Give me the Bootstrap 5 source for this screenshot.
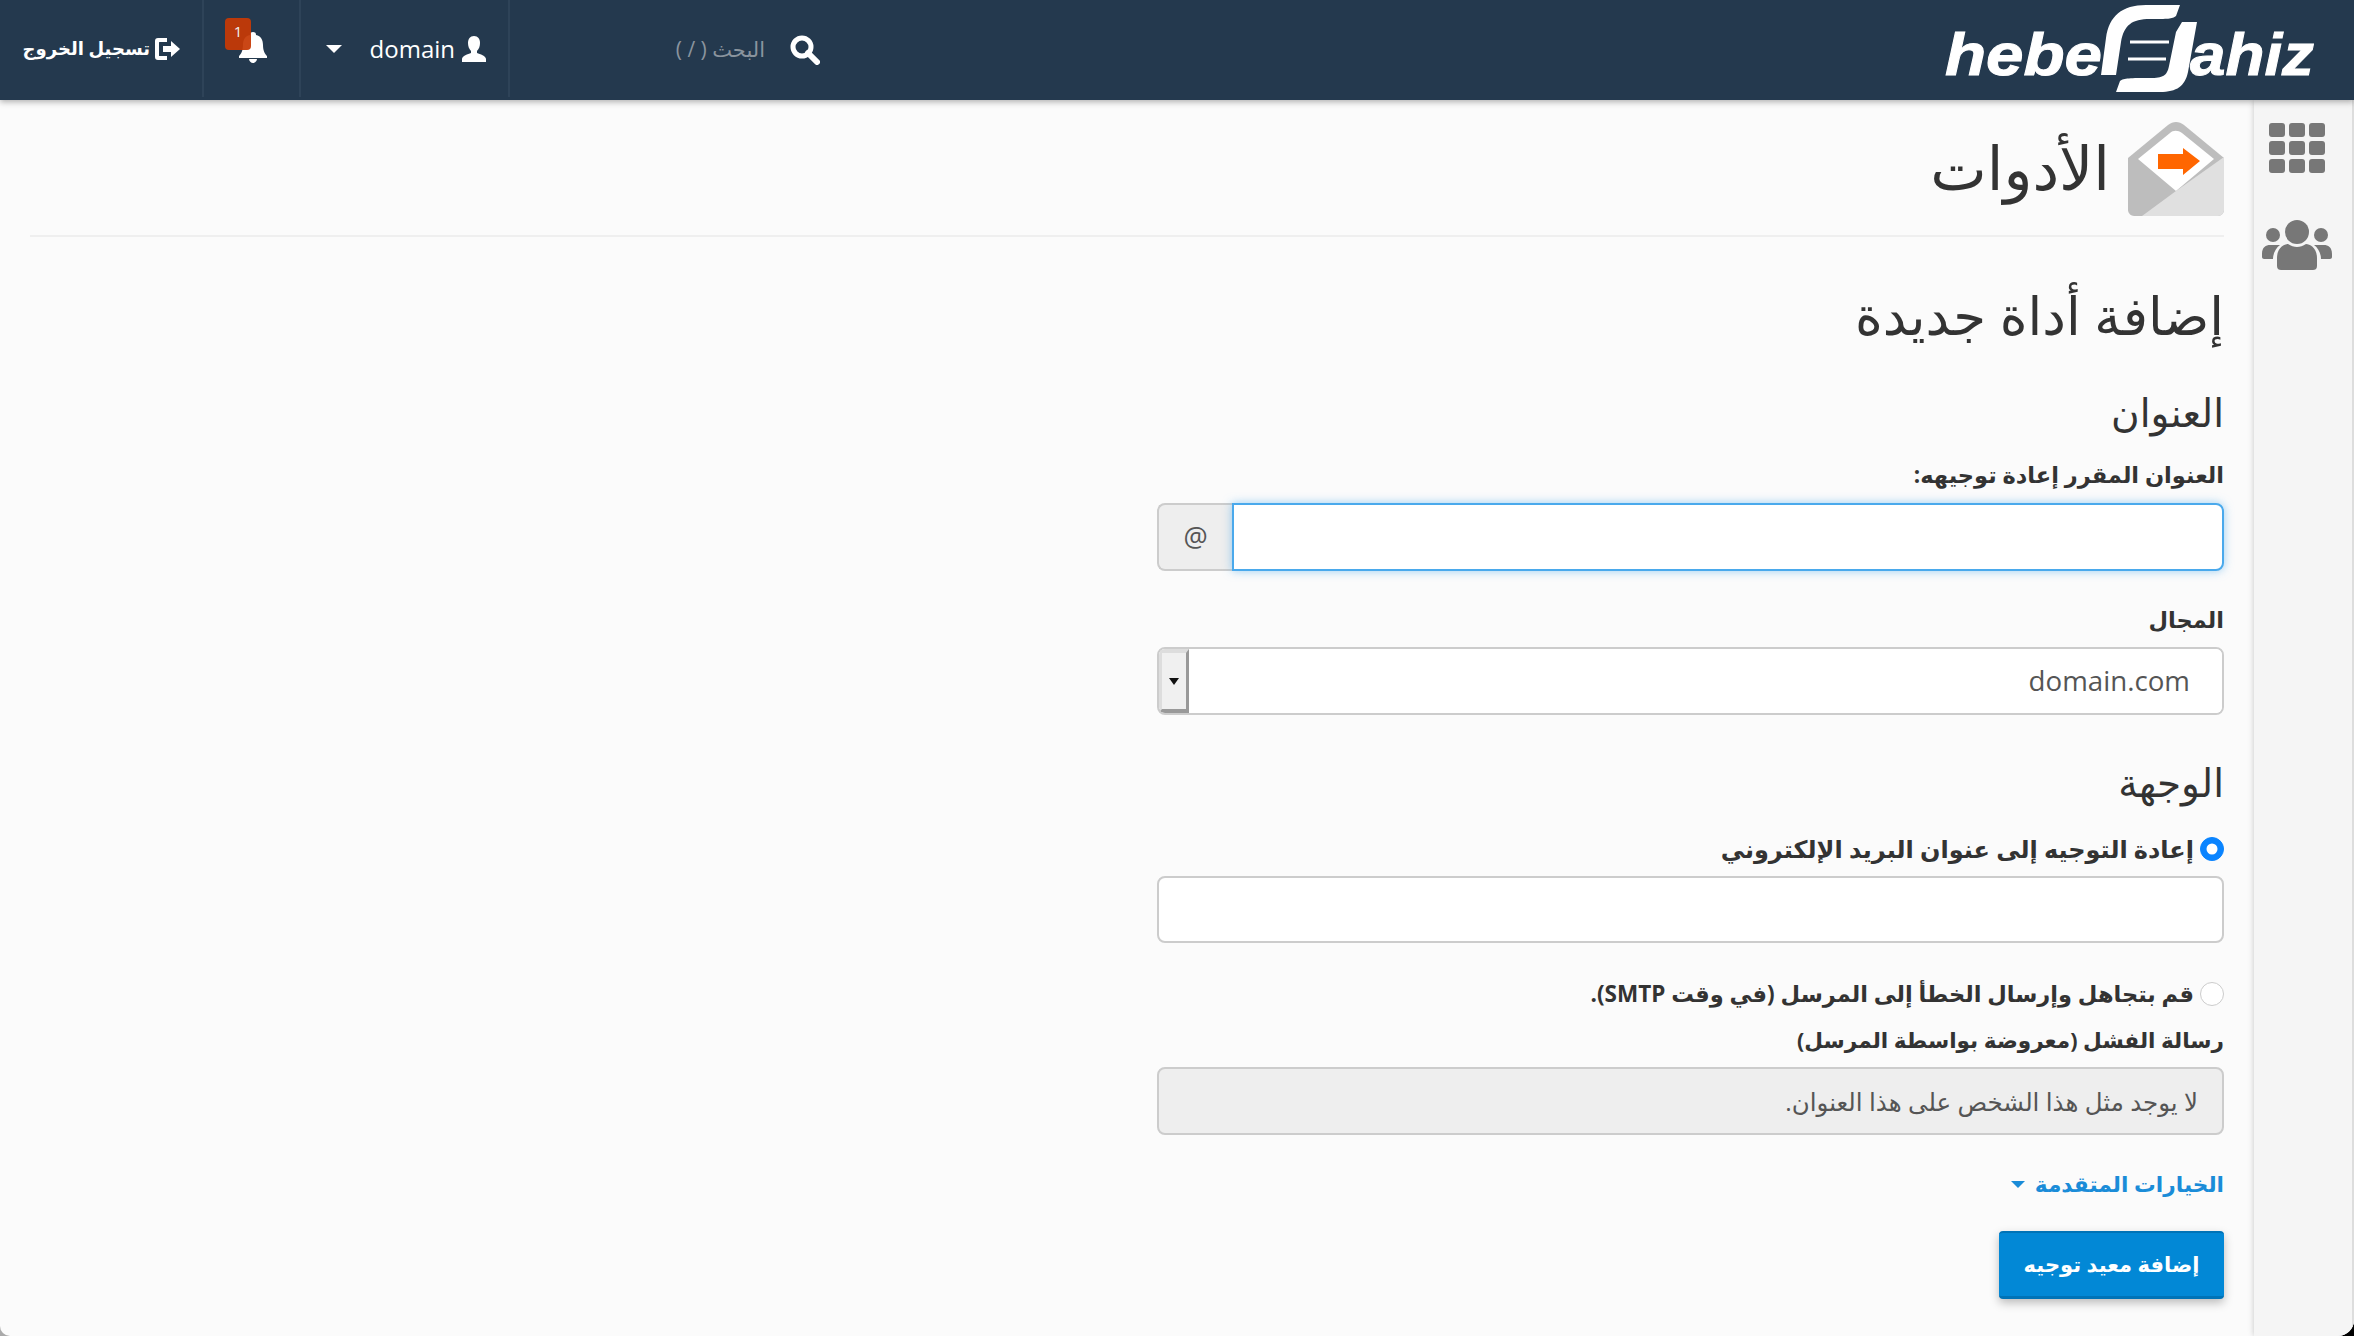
<!DOCTYPE html>
<html lang="ar" dir="rtl">
<head>
<meta charset="utf-8">
<title>الأدوات</title>
<link rel="stylesheet" href="https://cdn.jsdelivr.net/npm/bootstrap@5.3.0/dist/css/bootstrap.min.css">
<style>
html,body{height:100%;margin:0;overflow:hidden}
body{font-family:"Open Sans","DejaVu Sans",sans-serif;color:#333;background:linear-gradient(to right,#aaa 50%,#000 50%)}
.shell{height:1336px;background:#fbfbfb;border-bottom-right-radius:16px;border-bottom-left-radius:10px;overflow:hidden;display:flex;flex-direction:column}
.hdr{height:100px;flex:none;background:#24394e;color:#fff;box-shadow:0 2px 6px rgba(0,0,0,.3);position:relative;z-index:2}
.logo{width:420px;padding-right:34px;flex:none}
.logo svg{direction:ltr}
.logo text{font:italic 700 60px "Liberation Sans",sans-serif;fill:#fff;stroke:#fff;stroke-width:1px;direction:ltr}
.srch{width:311px;flex:none;padding-right:1px;gap:25px}
.srch input{background:transparent;border:0;outline:0;width:255px;font-size:21px;color:#999;padding:0}
.srch input::placeholder{color:#8a949e;opacity:1}
.cell{border-right:2px solid #2e4358;height:97px;align-self:flex-start}
.c-user{width:209px;padding-right:22px;gap:7px;font-size:24px}
.c-bell{width:97px;position:relative}
.c-out{width:204px;padding-right:22px;gap:5px;font-size:18px;font-weight:600}
.caret-w{width:0;height:0;border-left:8px solid transparent;border-right:8px solid transparent;border-top:8px solid #fff;margin-right:21px}
.bell{position:absolute;left:35px;top:32px}
.note{position:absolute;left:21px;top:18px;width:26px;height:32px;border-radius:4px;background:#c73a05;color:#fff;font-size:15px;text-align:center;line-height:26px;opacity:.93}
.side{width:100px;flex:none;background:#f5f5f5;box-shadow:0 0 6px rgba(0,0,0,.22),inset -2px 0 #ddd;padding-top:23px;padding-right:14px;gap:47px;position:relative;z-index:1}
.pane{padding:0 30px;min-width:0}
.ttl{height:137px;border-bottom:2px solid #efefef;padding-top:22px;gap:18px}
.ttl h1{font-size:60px;font-weight:400;margin:0;line-height:90px;color:#333}
.fm{width:1067px}
.h-new{font-size:53px;font-weight:400;line-height:60px;margin:48px 0 0;color:#333}
.h-sec{font-size:39px;font-weight:400;line-height:50px;margin:0;color:#333}
.lbl{font-size:22.5px;font-weight:700;line-height:30px;color:#333;margin:0;display:block}
.lbl-s{font-size:21.6px}
.fld{height:67px;border:2px solid #ccc;border-radius:8px;background:#fff;font-size:27px;color:#555;box-shadow:none;padding:0 22px}
.grp{height:68px}
.at{width:75px;flex:none;height:68px;background:#eee;border:2px solid #ccc;border-right:0;border-top-left-radius:8px;border-bottom-left-radius:8px;color:#555;font-size:27px;order:2;justify-content:center}
.fld-on{height:68px;border:2px solid #4aa9ec;border-radius:0 8px 8px 0;box-shadow:0 0 10px rgba(74,169,236,.55);outline:0;position:relative;z-index:1;background:#fff}
.sel{height:68px;border:2px solid #ccc;border-radius:8px;background:#fff;overflow:hidden}
.sel select{appearance:none;border:0;outline:0;background:#fff;flex:1;font-size:27.7px;color:#555;padding:0 32px;height:100%;direction:ltr;text-align:right}
.arr{order:2;width:30px;flex:none;height:100%;background:#f0f0f0;border-right:3px solid #999;border-bottom:4px solid #999;border-top:4px solid #ddd;border-left:3px solid #ddd;justify-content:center}
.arr i{display:block;width:0;height:0;border-left:5px solid transparent;border-right:5px solid transparent;border-top:7px solid #111}
.rd{width:24px;height:24px;margin:0;flex:none;background-color:#fff;border:1px solid #ccc}
.rd:checked{background-color:#0a84ff;border-color:#0a84ff}
.rl{font-size:22.5px;font-weight:700;line-height:30px;gap:6px;margin:0}
.rl-big{font-size:24px}
.off{height:68px;background:#eee;font-size:24.5px;padding:0 24px;color:#555;direction:rtl;opacity:1}
.off:disabled{background:#eee;border-color:#ccc;color:#555;opacity:1}
.more{color:#1a8cd8;font-size:21.7px;font-weight:700;text-decoration:none;gap:10px;line-height:30px}
.caret-b{width:0;height:0;border-left:7px solid transparent;border-right:7px solid transparent;border-top:7px solid #1a8cd8}
.go{width:225px;height:68px;background:#0288d6;border:0;border-top:2px solid #0073b7;border-bottom:3px solid #0073b7;border-radius:4px;color:#fff;font-size:21px;font-weight:700;box-shadow:0 4px 10px rgba(0,0,0,.25);padding:0}
.go:hover{background:#0288d6;color:#fff}
.g12{margin-top:12px}.g13{margin-top:13px}.g16{margin-top:16px}.g23{margin-top:23px}.g27{margin-top:27px}.g32{margin-top:32px}.g34{margin-top:34px}.g36{margin-top:36px}.g42{margin-top:42px}
</style>
</head>
<body>
<div class="shell">
  <header class="hdr d-flex align-items-stretch">
    <div class="logo d-flex align-items-start">
      <svg width="380" height="100" viewBox="1940 0 380 100" aria-label="hebel Jahiz">
        <text x="1945" y="75" textLength="157" lengthAdjust="spacingAndGlyphs">hebe</text>
        <text x="2190" y="75" textLength="124" lengthAdjust="spacingAndGlyphs">ahiz</text>
        <path d="M2101 75 L2106 38 C2109 16 2122 5 2146 5 L2180 5 L2176 16 C2172 19 2168 19 2150 19 C2132 19 2124 25 2121 42 L2116 75 Z" fill="#fff"/>
        <path d="M2182 22 L2197 22 L2188 72 C2185 86 2177 92 2160 92 L2116 92 L2120 81 C2124 78 2130 78 2150 78 C2163 78 2167 76 2169 66 L2176 32 Z" fill="#fff"/>
        <path d="M2130 42 H2169 M2128 59 H2166" stroke="#fff" stroke-width="3"/>
      </svg>
    </div>
    <div class="d-flex align-items-stretch me-auto">
      <form class="srch d-flex align-items-center">
        <svg width="30" height="30" viewBox="0 0 30 30" fill="none" stroke="#fff"><circle cx="12" cy="12" r="9" stroke-width="5"/><path d="M18 18l9 9" stroke-width="6" stroke-linecap="round"/></svg>
        <input type="text" placeholder="البحث ( / )" aria-label="البحث">
      </form>
      <div class="cell c-user d-flex align-items-center">
        <svg width="24" height="26" viewBox="0 0 24 26" fill="#fff"><path d="M12 0c4 0 6 3 6 7 0 3-1 6-3 8v2c3 1 9 3 9 6v3H0v-3c0-3 6-5 9-6v-2C7 13 6 10 6 7c0-4 2-7 6-7z"/></svg>
        <span>domain</span>
        <i class="caret-w"></i>
      </div>
      <div class="cell c-bell d-flex align-items-center">
        <svg class="bell" width="28" height="31" viewBox="0 0 28 31" fill="#fff"><path d="M14 0c2 0 3 1 3 3 5 1 7 5 7 10 0 6 2 9 4 11v2H0v-2c2-2 4-5 4-11 0-5 2-9 7-10 0-2 1-3 3-3zM10 27h8c0 2-2 4-4 4s-4-2-4-4z"/></svg>
        <span class="note">1</span>
      </div>
      <div class="cell c-out d-flex align-items-center">
        <svg width="25" height="22" viewBox="0 0 25 22" fill="#fff"><path d="M3 0h9v4H5c-1 0-1 0-1 1v12c0 1 0 1 1 1h7v4H3c-2 0-3-1-3-3V3c0-2 1-3 3-3z"/><path d="M16 3l9 8-9 8v-5H8V8h8z"/></svg>
        <span>تسجيل الخروج</span>
      </div>
    </div>
  </header>
  <div class="d-flex flex-grow-1">
    <aside class="side d-flex flex-column align-items-center">
      <svg width="56" height="50" viewBox="0 0 56 50" fill="#777"><rect width="16" height="14" rx="3"/><rect x="20" width="16" height="14" rx="3"/><rect x="40" width="16" height="14" rx="3"/><rect y="18" width="16" height="14" rx="3"/><rect x="20" y="18" width="16" height="14" rx="3"/><rect x="40" y="18" width="16" height="14" rx="3"/><rect y="36" width="16" height="14" rx="3"/><rect x="20" y="36" width="16" height="14" rx="3"/><rect x="40" y="36" width="16" height="14" rx="3"/></svg>
      <svg width="70" height="50" viewBox="0 0 70 50" fill="#777"><ellipse cx="35" cy="12" rx="12" ry="12"/><ellipse cx="11" cy="15" rx="7" ry="7"/><ellipse cx="59" cy="15" rx="7" ry="7"/><path d="M15 38c0-10 7-14 11-14 3 2 6 3 9 3s6-1 9-3c4 0 11 4 11 14v8c0 3-2 4-4 4H19c-2 0-4-1-4-4z"/><path d="M0 34c0-7 4-9 8-9h10c-4 3-7 8-7 14l-9 0c-1 0-2-1-2-2zM70 34c0-7-4-9-8-9H52c4 3 7 8 7 14l9 0c1 0 2-1 2-2z"/></svg>
    </aside>
    <main class="pane flex-grow-1">
      <div class="ttl d-flex align-items-start">
        <svg width="96" height="94" viewBox="0 0 96 94"><path d="M40 3c5-4 11-4 16 0l40 33v52c0 3-3 6-6 6H6c-3 0-6-3-6-6V36z" fill="#bdbdbd"/><path d="M42 11c3-3 8-3 12 0l32 26-38 32L10 37z" fill="#fff"/><path d="M96 35v53c0 3-3 6-6 6H14l34-25z" fill="#e0e0e0"/><path d="M30 32h25v-6l17 13-17 14v-6H30z" fill="#f60"/></svg>
        <h1>الأدوات</h1>
      </div>
      <div class="fm">
        <h2 class="h-new">إضافة أداة جديدة</h2>
        <h3 class="h-sec g42">العنوان</h3>
        <label class="lbl g23" for="a1">العنوان المقرر إعادة توجيهه:</label>
        <div class="grp d-flex g13">
          <input id="a1" class="fld fld-on flex-grow-1" type="text">
          <span class="at d-flex align-items-center">@</span>
        </div>
        <label class="lbl g34" for="a2">المجال</label>
        <div class="sel d-flex g12">
          <select id="a2"><option>domain.com</option></select>
          <span class="arr d-flex align-items-center"><i></i></span>
        </div>
        <h3 class="h-sec g42">الوجهة</h3>
        <label class="rl rl-big d-flex align-items-center g27"><input class="form-check-input rd" type="radio" name="d" checked>إعادة التوجيه إلى عنوان البريد الإلكتروني</label>
        <input class="fld w-100 d-block g12" type="text" aria-label="البريد">
        <label class="rl d-flex align-items-center g36"><input class="form-check-input rd" type="radio" name="d">قم بتجاهل وإرسال الخطأ إلى المرسل (في وقت SMTP).</label>
        <label class="lbl lbl-s g16" for="a3">رسالة الفشل (معروضة بواسطة المرسل)</label>
        <input id="a3" class="fld off w-100 d-block g12" type="text" disabled value="لا يوجد مثل هذا الشخص على هذا العنوان.">
        <a class="more d-inline-flex align-items-center g34" href="#">الخيارات المتقدمة <i class="caret-b"></i></a>
        <div class="g32"><button class="btn go" type="button">إضافة معيد توجيه</button></div>
      </div>
    </main>
  </div>
</div>
</body>
</html>
